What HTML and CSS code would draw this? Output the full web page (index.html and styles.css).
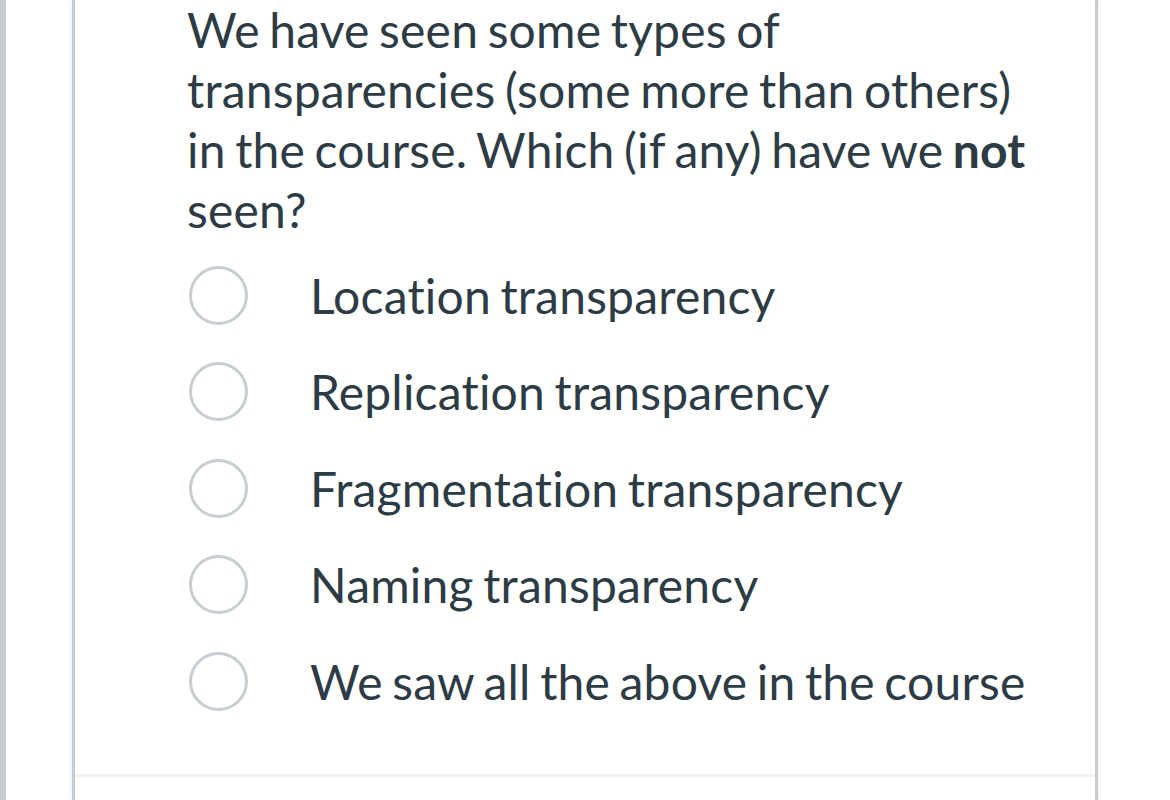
FILE: index.html
```html
<!DOCTYPE html>
<html>
<head>
<meta charset="utf-8">
<link rel="stylesheet" href="styles.css">
</head>
<body>
<div class="page">
  <div class="side-bar"></div>
  <div class="card">
    <div class="question">
      <div class="question-text">We have seen some types of transparencies (some more than others) in the course. Which (if any) have we <strong>not</strong> seen?</div>
      <div class="answers">
        <label class="answer"><span class="radio"></span><span class="answer-text">Location transparency</span></label>
        <label class="answer"><span class="radio"></span><span class="answer-text">Replication transparency</span></label>
        <label class="answer"><span class="radio"></span><span class="answer-text">Fragmentation transparency</span></label>
        <label class="answer"><span class="radio"></span><span class="answer-text">Naming transparency</span></label>
        <label class="answer"><span class="radio"></span><span class="answer-text">We saw all the above in the course</span></label>
      </div>
    </div>
  </div>
</div>
</body>
</html>
```

FILE: styles.css
```css
html, body {
  margin: 0;
  padding: 0;
  background: #ffffff;
  height: 800px;
  overflow: hidden;
}
.page {
  display: flex;
  height: 800px;
  font-family: Lato, "Liberation Sans", sans-serif;
  color: #2d3b45;
  font-variant-ligatures: none;
  letter-spacing: 0.2px;
  word-spacing: -3px;
}
.side-bar {
  width: 6px;
  background: #c7cdd1;
  flex: none;
}
.card {
  margin-left: 66px;
  width: 1020px;
  flex: none;
  border-left: 3px solid #c7cdd1;
  border-right: 3px solid #c7cdd1;
  box-shadow: 0 0 4px rgba(0, 0, 0, 0.12);
  background: #fff;
}
.question {
  padding-left: 112px;
  padding-right: 50px;
  border-bottom: 3px solid #f2f2f2;
  height: 777px;
  box-sizing: border-box;
}
.question-text {
  font-size: 48px;
  line-height: 60px;
  width: 850px;
}
.question-text strong {
  font-weight: 700;
}
.answers {
  padding-top: 7px;
  display: flex;
  flex-direction: column;
}
.answer {
  display: flex;
  align-items: center;
  height: 96.5px;
}
.radio {
  width: 53px;
  height: 53px;
  border: 3px solid #c7cdd1;
  border-radius: 50%;
  flex: none;
  margin-left: 2px;
}
.answer-text {
  margin-left: 62px;
  font-size: 48px;
}
```
